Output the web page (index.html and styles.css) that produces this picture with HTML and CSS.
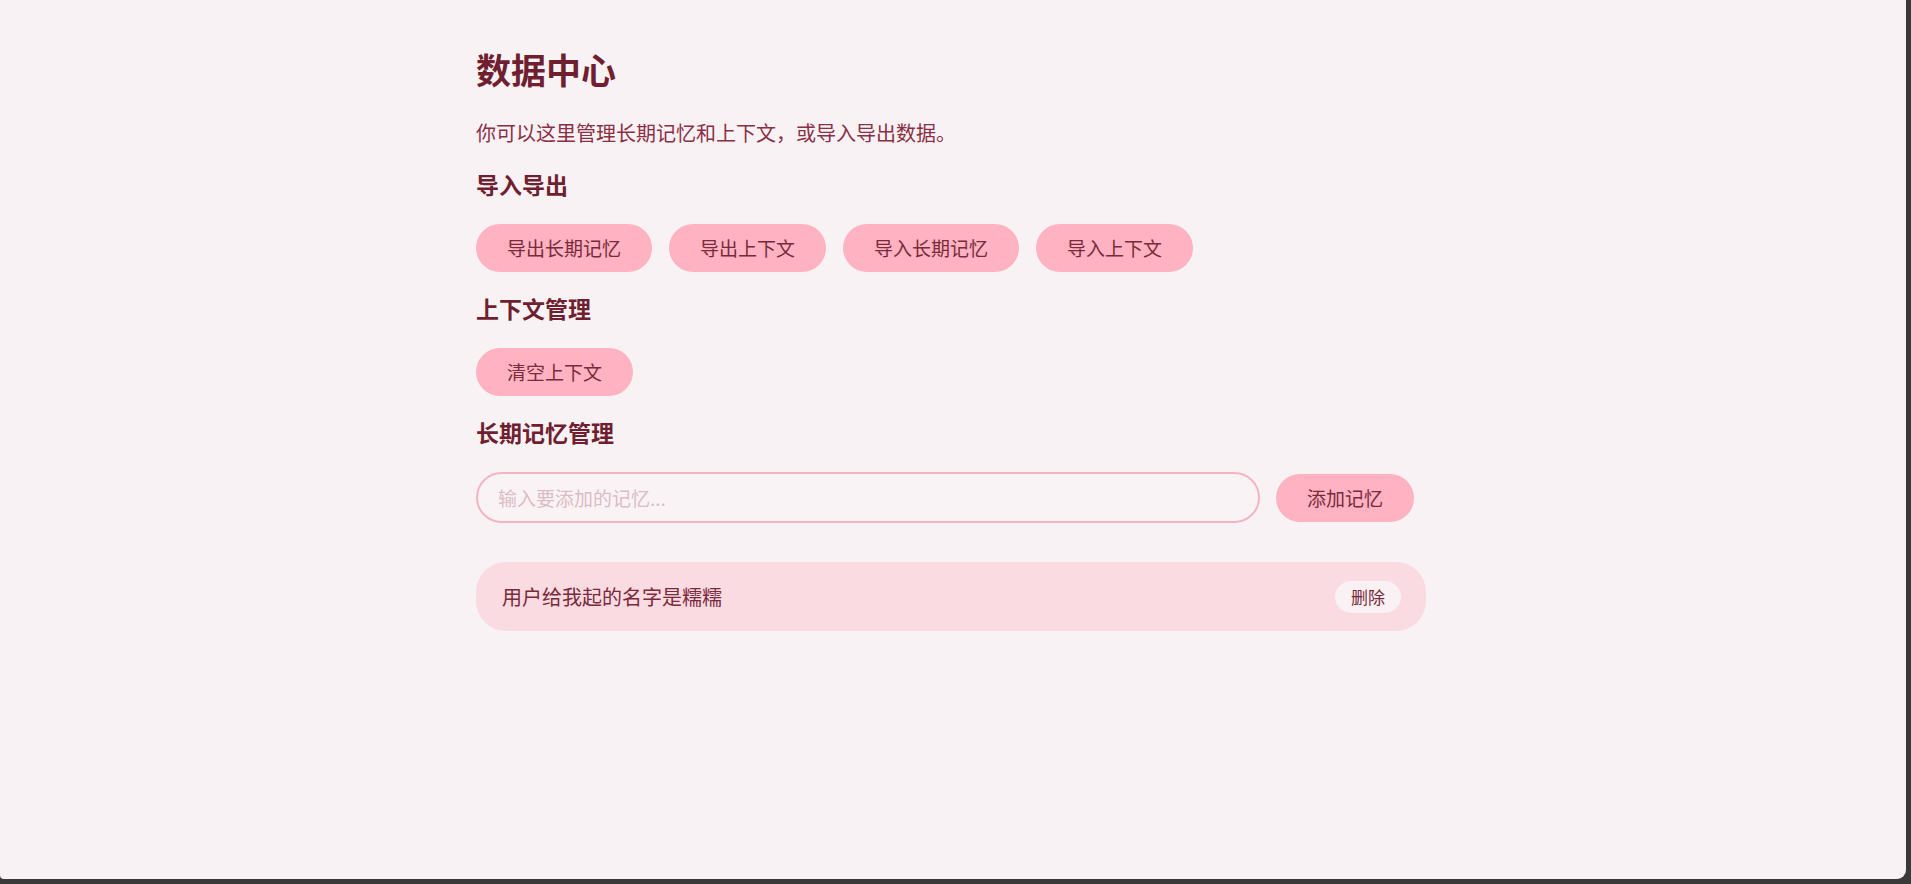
FILE: index.html
```html
<!DOCTYPE html>
<html lang="zh-CN">
<head>
<meta charset="utf-8">
<title>数据中心</title>
<link rel="stylesheet" href="styles.css">
</head>
<body>
<div class="app">
  <main class="panel">
    <h1 class="title">数据中心</h1>
    <p class="desc">你可以这里管理长期记忆和上下文，或导入导出数据。</p>

    <h2 class="section">导入导出</h2>
    <div class="btn-row">
      <button class="btn">导出长期记忆</button>
      <button class="btn">导出上下文</button>
      <button class="btn">导入长期记忆</button>
      <button class="btn">导入上下文</button>
    </div>

    <h2 class="section">上下文管理</h2>
    <div class="btn-row">
      <button class="btn">清空上下文</button>
    </div>

    <h2 class="section">长期记忆管理</h2>
    <div class="add-row">
      <input class="mem-input" type="text" placeholder="输入要添加的记忆...">
      <button class="btn">添加记忆</button>
    </div>

    <ul class="mem-list">
      <li class="mem-item">
        <span class="mem-text">用户给我起的名字是糯糯</span>
        <button class="del-btn">删除</button>
      </li>
    </ul>
  </main>
</div>
</body>
</html>
```

FILE: styles.css
```css
html, body {
  margin: 0;
  padding: 0;
  height: 100%;
}

body {
  background: #3b3a3b;
  font-family: "Noto Sans CJK SC", "Noto Sans", sans-serif;
}

.app {
  width: 1906px;
  height: 879px;
  background: #f9f2f4;
  border-radius: 0 0 9px 4px;
  overflow: hidden;
  box-sizing: border-box;
  padding-right: 4px;
}

.panel {
  width: 950px;
  margin: 0 auto;
  padding-top: 45px;
}

.title {
  margin: 0;
  font-size: 35px;
  line-height: 48px;
  font-weight: 700;
  color: #6f1f30;
}

.desc {
  margin: 25px 0 0;
  font-size: 20px;
  line-height: 30px;
  color: #8a2f45;
}

.section {
  margin: 20px 0 0;
  font-size: 23px;
  line-height: 32px;
  font-weight: 700;
  color: #6f1f30;
}

.btn-row {
  display: flex;
  gap: 17px;
  margin-top: 24px;
}

.btn {
  height: 48px;
  padding: 0 31px;
  border: none;
  border-radius: 24px;
  background: #ffb2c1;
  color: #7a2a3b;
  font-family: inherit;
  font-size: 19px;
  line-height: 48px;
  cursor: pointer;
}

.add-row {
  display: flex;
  align-items: center;
  gap: 16px;
  margin-top: 24px;
  padding-right: 12px;
}

.mem-input {
  flex: 1;
  height: 51px;
  box-sizing: border-box;
  padding: 0 20px;
  border: 2px solid #f6b3c3;
  border-radius: 26px;
  background: #faf3f5;
  font-family: inherit;
  font-size: 19px;
  color: #7a2a3b;
  outline: none;
}

.mem-input::placeholder {
  color: #dcbcc6;
}

.mem-list {
  list-style: none;
  margin: 39px 0 0;
  padding: 0;
}

.mem-item {
  display: flex;
  align-items: center;
  justify-content: space-between;
  height: 69px;
  box-sizing: border-box;
  padding: 0 25px 0 26px;
  border-radius: 30px;
  background: #f9dbe1;
}

.mem-text {
  font-size: 20px;
  color: #7a2a3b;
}

.del-btn {
  height: 32px;
  padding: 0 16px;
  border: none;
  border-radius: 16px;
  background: #f9f1f3;
  color: #7a2a3b;
  font-family: inherit;
  font-size: 17px;
  line-height: 32px;
  cursor: pointer;
}
```
